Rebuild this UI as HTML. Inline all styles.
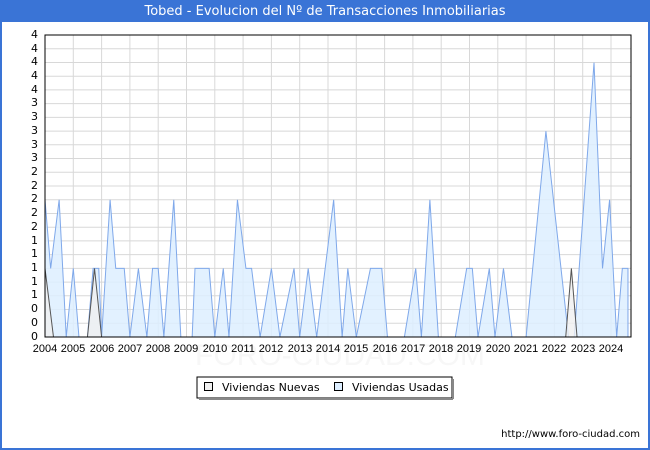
<!DOCTYPE html>
<html><head><style>
body{margin:0;width:650px;height:450px;overflow:hidden;font-family:"DejaVu Sans","Liberation Sans",sans-serif;}
.frame{position:absolute;left:0;top:0;width:646px;height:446px;border:2px solid #3a74d6;background:#fff;}
.title{position:absolute;left:0;top:0;width:650px;height:22px;background:#3a74d6;color:#fff;font-size:13px;text-align:center;line-height:23px;}
.yl{position:absolute;left:0;width:38px;text-align:right;font-size:11px;color:#000;}
.xl{position:absolute;top:343px;font-size:11px;width:40px;text-align:center;font-family:"Liberation Sans",sans-serif;}
</style></head><body>
<div class="frame"></div>
<div class="title">Tobed - Evolucion del Nº de Transacciones Inmobiliarias</div>
<svg style="position:absolute;left:0;top:0" width="650" height="450">
<g stroke="#d8d8d8" stroke-width="1">
<line x1="45" x2="631" y1="48.7" y2="48.7"/><line x1="45" x2="631" y1="62.5" y2="62.5"/><line x1="45" x2="631" y1="76.2" y2="76.2"/><line x1="45" x2="631" y1="89.9" y2="89.9"/><line x1="45" x2="631" y1="103.6" y2="103.6"/><line x1="45" x2="631" y1="117.4" y2="117.4"/><line x1="45" x2="631" y1="131.1" y2="131.1"/><line x1="45" x2="631" y1="144.8" y2="144.8"/><line x1="45" x2="631" y1="158.5" y2="158.5"/><line x1="45" x2="631" y1="172.3" y2="172.3"/><line x1="45" x2="631" y1="186" y2="186"/><line x1="45" x2="631" y1="199.7" y2="199.7"/><line x1="45" x2="631" y1="213.5" y2="213.5"/><line x1="45" x2="631" y1="227.2" y2="227.2"/><line x1="45" x2="631" y1="240.9" y2="240.9"/><line x1="45" x2="631" y1="254.6" y2="254.6"/><line x1="45" x2="631" y1="268.4" y2="268.4"/><line x1="45" x2="631" y1="282.1" y2="282.1"/><line x1="45" x2="631" y1="295.8" y2="295.8"/><line x1="45" x2="631" y1="309.5" y2="309.5"/><line x1="45" x2="631" y1="323.3" y2="323.3"/>
<line y1="35" y2="337" x1="73.3" x2="73.3"/><line y1="35" y2="337" x1="101.6" x2="101.6"/><line y1="35" y2="337" x1="129.9" x2="129.9"/><line y1="35" y2="337" x1="158.2" x2="158.2"/><line y1="35" y2="337" x1="186.5" x2="186.5"/><line y1="35" y2="337" x1="214.8" x2="214.8"/><line y1="35" y2="337" x1="243.1" x2="243.1"/><line y1="35" y2="337" x1="271.4" x2="271.4"/><line y1="35" y2="337" x1="299.7" x2="299.7"/><line y1="35" y2="337" x1="328" x2="328"/><line y1="35" y2="337" x1="356.3" x2="356.3"/><line y1="35" y2="337" x1="384.6" x2="384.6"/><line y1="35" y2="337" x1="412.9" x2="412.9"/><line y1="35" y2="337" x1="441.2" x2="441.2"/><line y1="35" y2="337" x1="469.5" x2="469.5"/><line y1="35" y2="337" x1="497.8" x2="497.8"/><line y1="35" y2="337" x1="526.1" x2="526.1"/><line y1="35" y2="337" x1="554.4" x2="554.4"/><line y1="35" y2="337" x1="582.7" x2="582.7"/><line y1="35" y2="337" x1="611" x2="611"/>
</g>
<text x="340" y="365" font-size="30" fill="#f7f7f7" text-anchor="middle" font-family="Liberation Sans">FORO-CIUDAD.COM</text>
<g transform="translate(45,337) scale(28.3,-68.6)">
<polygon fill="#ddeeff" fill-opacity="0.85" stroke="#7fa8ea" stroke-width="1" vector-effect="non-scaling-stroke" points="0,0 0,2 0.2,1 0.5,2 0.75,0 1,1 1.2,0 1.5,0 1.7,1 1.9,1 2,0 2.3,2 2.5,1 2.8,1 3,0 3.3,1 3.6,0 3.8,1 4,1 4.2,0 4.55,2 4.8,0 5.2,0 5.3,1 5.8,1 6,0 6.3,1 6.5,0 6.8,2 7.1,1 7.3,1 7.6,0 8,1 8.3,0 8.8,1 9,0 9.3,1 9.6,0 10.2,2 10.5,0 10.7,1 11,0 11.5,1 11.9,1 12.1,0 12.7,0 13.1,1 13.3,0 13.6,2 13.9,0 14.5,0 14.9,1 15.1,1 15.3,0 15.7,1 15.9,0 16.2,1 16.5,0 17,0 17.7,3 18.5,0 18.7,0 19.4,4 19.7,1 19.95,2 20.2,0 20.4,1 20.6,1 20.6,0"/>
<polygon fill="#f0f0f0" fill-opacity="0.8" stroke="#555" stroke-width="1" vector-effect="non-scaling-stroke" points="0,0 0,1 0.3,0 1.5,0 1.75,1 2,0 18.4,0 18.6,1 18.8,0 20.6,0"/>
</g>
<rect x="45" y="35" width="586" height="302" fill="none" stroke="#000" stroke-width="1"/>
<rect x="197" y="377" width="255" height="21" fill="#fff" stroke="#000"/>
<line x1="199" y1="399" x2="453" y2="399" stroke="#888" stroke-width="2"/>
<line x1="453" y1="379" x2="453" y2="399" stroke="#888" stroke-width="2"/>
<rect x="204.5" y="382.5" width="8" height="8" fill="#f0f0f0" stroke="#000"/>
<text x="222" y="391" font-size="11">Viviendas Nuevas</text>
<rect x="334.5" y="382.5" width="8" height="8" fill="#ddeeff" stroke="#000"/>
<text x="352" y="391" font-size="11">Viviendas Usadas</text>
<text x="640" y="437" font-size="10" text-anchor="end">http://www.foro-ciudad.com</text>
</svg>
<div class="yl" style="top:28px">4</div><div class="yl" style="top:42px">4</div><div class="yl" style="top:55px">4</div><div class="yl" style="top:69px">4</div><div class="yl" style="top:83px">4</div><div class="yl" style="top:96px">3</div><div class="yl" style="top:110px">3</div><div class="yl" style="top:124px">3</div><div class="yl" style="top:138px">3</div><div class="yl" style="top:151px">3</div><div class="yl" style="top:165px">2</div><div class="yl" style="top:179px">2</div><div class="yl" style="top:192px">2</div><div class="yl" style="top:206px">2</div><div class="yl" style="top:220px">2</div><div class="yl" style="top:234px">1</div><div class="yl" style="top:247px">1</div><div class="yl" style="top:261px">1</div><div class="yl" style="top:275px">1</div><div class="yl" style="top:288px">1</div><div class="yl" style="top:302px">0</div><div class="yl" style="top:316px">0</div><div class="yl" style="top:330px">0</div>
<div class="xl" style="left:25px">2004</div><div class="xl" style="left:53px">2005</div><div class="xl" style="left:82px">2006</div><div class="xl" style="left:110px">2007</div><div class="xl" style="left:138px">2008</div><div class="xl" style="left:166px">2009</div><div class="xl" style="left:195px">2010</div><div class="xl" style="left:223px">2011</div><div class="xl" style="left:251px">2012</div><div class="xl" style="left:280px">2013</div><div class="xl" style="left:308px">2014</div><div class="xl" style="left:336px">2015</div><div class="xl" style="left:365px">2016</div><div class="xl" style="left:393px">2017</div><div class="xl" style="left:421px">2018</div><div class="xl" style="left:449px">2019</div><div class="xl" style="left:478px">2020</div><div class="xl" style="left:506px">2021</div><div class="xl" style="left:534px">2022</div><div class="xl" style="left:563px">2023</div><div class="xl" style="left:591px">2024</div>
</body></html>
